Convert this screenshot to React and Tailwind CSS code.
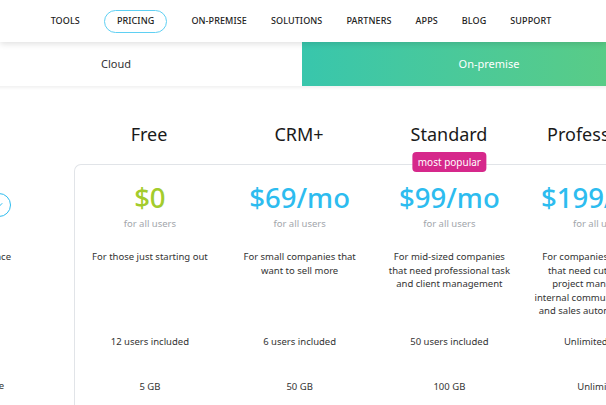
import { ChevronDown } from "lucide-react";

const navItems = ["TOOLS", "PRICING", "ON-PREMISE", "SOLUTIONS", "PARTNERS", "APPS", "BLOG", "SUPPORT"];

const plans = [
  {
    name: "Free",
    price: "$0",
    priceClass: "text-[#a3cc2c]",
    desc: ["For those just starting out"],
    users: "12 users included",
    storage: "5 GB",
  },
  {
    name: "CRM+",
    price: "$69/mo",
    priceClass: "text-[#2dbcef]",
    desc: ["For small companies that", "want to sell more"],
    users: "6 users included",
    storage: "50 GB",
  },
  {
    name: "Standard",
    price: "$99/mo",
    priceClass: "text-[#2dbcef]",
    desc: ["For mid-sized companies", "that need professional task", "and client management"],
    users: "50 users included",
    storage: "100 GB",
    popular: true,
  },
  {
    name: "Professional",
    price: "$199/mo",
    priceClass: "text-[#2dbcef]",
    desc: [
      "For companies of all sizes",
      "that need cutting-edge",
      "project management",
      "internal communications, HR",
      "and sales automation tools",
    ],
    users: "Unlimited users",
    storage: "Unlimited",
  },
];

export default function App() {
  return (
    <div
      className="w-[606px] h-[405px] overflow-hidden bg-white text-[#333]"
      style={{ fontFamily: '"Noto Sans", "Open Sans", sans-serif' }}
    >
      {/* top nav */}
      <div className="relative z-20 h-[42px] bg-white shadow-[0_2px_6px_rgba(0,0,0,0.12)] flex items-center justify-center pr-[4px]">
        <div className="flex items-center gap-[24px]">
          {navItems.map((item) => (
            <span
              key={item}
              className={`h-[23px] flex items-center rounded-full text-[9px] font-medium tracking-[0.1px] text-[#222] ${
                item === "PRICING" ? "px-3 border border-[#5fd0f3]" : ""
              }`}
            >
              {item}
            </span>
          ))}
        </div>
      </div>

      <div className="w-[746px] ml-[-70px]">
        {/* cloud / on-premise tabs */}
        <div className="relative z-10 flex h-[44px] shadow-[0_2px_3px_rgba(0,0,0,0.06)]">
          <div className="w-[372px] flex items-center justify-center text-[11px] text-[#333] bg-white">
            Cloud
          </div>
          <div className="w-[374px] flex items-center justify-center text-[11px] text-white bg-gradient-to-r from-[#38c6ac] to-[#5fcd7d]">
            On-premise
          </div>
        </div>

        {/* pricing table */}
        <div className="flex">
          <div className="w-[144px] shrink-0 flex flex-col items-end pr-[63px]">
            <div className="h-[107px]" />
            <div className="w-[24px] h-[24px] rounded-full border-[1.5px] border-[#2dbcef] flex items-center justify-center text-[#2dbcef]">
              <ChevronDown size={12} strokeWidth={2} />
            </div>
            <div className="mt-[33px] text-[9.5px] leading-[14px]">Target audience</div>
            <div className="mt-[115px] text-[9.5px] leading-[14px] mr-[7px]">Storage</div>
          </div>

          <div className="w-[600px] shrink-0">
            <div className="grid grid-cols-4 h-[78px] pt-[37px]">
              {plans.map((p) => (
                <div key={p.name} className="text-center text-[18px] leading-[22px] text-[#1a1a1a]">
                  {p.name}
                </div>
              ))}
            </div>

            <div className="grid grid-cols-4 border-[1.5px] border-[#e1e4e8] rounded-tl-[7px] border-r-0 border-b-0 h-[260px] pt-[17px]">
              {plans.map((p) => (
                <div key={p.name} className="relative flex flex-col items-center text-center px-1">
                  {p.popular && (
                    <div className="absolute top-[-30px] left-1/2 -translate-x-1/2 h-[20px] px-[5px] rounded-[4px] bg-[#d6288b] text-white text-[10px] leading-[20px] whitespace-nowrap">
                      most popular
                    </div>
                  )}
                  <div className={`text-[27.5px] leading-[31px] font-medium ${p.priceClass}`}>{p.price}</div>
                  <div className="mt-[4px] text-[9.5px] leading-[14px] text-[#a2a6ab]">for all users</div>
                  <div className="mt-[19px] h-[85px] text-[9.5px] leading-[13.5px] text-[#333]">
                    {p.desc.map((line) => (
                      <div key={line} className="whitespace-nowrap">
                        {line}
                      </div>
                    ))}
                  </div>
                  <div className="text-[9.5px] leading-[14px]">{p.users}</div>
                  <div className="mt-[31px] text-[9.5px] leading-[14px]">{p.storage}</div>
                </div>
              ))}
            </div>
          </div>
        </div>
      </div>
    </div>
  );
}
